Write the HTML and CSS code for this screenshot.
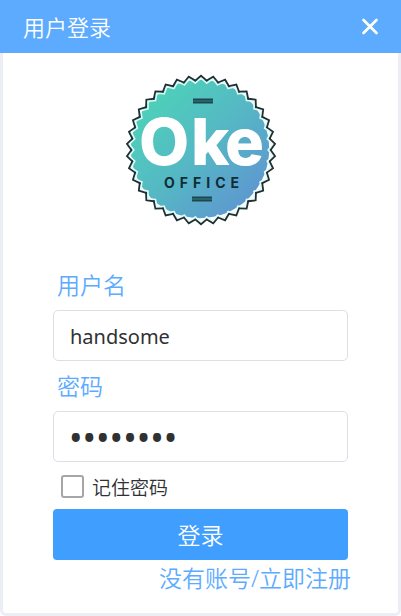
FILE: index.html
```html
<!DOCTYPE html>
<html lang="zh-CN">
<head>
<meta charset="utf-8">
<meta name="viewport" content="width=device-width, initial-scale=1">
<title>用户登录</title>
<link rel="stylesheet" href="styles.css">
</head>
<body>
<main class="dialog">
  <header class="titlebar">
    <h1 class="title">用户登录</h1>
    <button class="close" type="button" aria-label="关闭">
      <svg viewBox="0 0 18 18" width="18" height="18" aria-hidden="true"><path d="M2.5 2 15.500 15M15.500 2 2.500 15" fill="none" stroke="#fff" stroke-width="2.7" stroke-linecap="round"/></svg>
    </button>
  </header>
  <form class="form">
    <svg class="logo" viewBox="-76 -76 152 152" width="152" height="152" role="img" aria-label="Oke Office">
      <defs>
        <linearGradient id="sea" x1="0.12" y1="0.12" x2="0.88" y2="0.88">
          <stop offset="0" stop-color="#4dd2b9"/>
          <stop offset="0.5" stop-color="#55b8c4"/>
          <stop offset="1" stop-color="#5e97d0"/>
        </linearGradient>
        <!-- one tooth, doubled up to the 38 of the full rim -->
        <g id="t1">
          <path d="M-5.55-67 0-71.800 5.550-67" stroke="#e4faf6" stroke-width="1.5"/>
          <path d="M-5.750-69.400 0-74.300 5.750-69.400" stroke="#1d3034" stroke-width="1.8"/>
        </g>
        <g id="t2"><use href="#t1"/><use href="#t1" transform="rotate(9.47368)"/></g>
        <g id="t4"><use href="#t2"/><use href="#t2" transform="rotate(18.94737)"/></g>
        <g id="t8"><use href="#t4"/><use href="#t4" transform="rotate(37.89474)"/></g>
        <g id="t16"><use href="#t8"/><use href="#t8" transform="rotate(75.78947)"/></g>
      </defs>
      <circle cx="-1" cy="-1" r="69.2" fill="url(#sea)"/>
      <g fill="none" stroke-linejoin="miter" stroke-linecap="round">
        <use href="#t16"/>
        <use href="#t16" transform="rotate(151.57895)"/>
        <use href="#t4" transform="rotate(303.15789)"/>
        <use href="#t2" transform="rotate(341.05263)"/>
      </g>
      <path d="M-8-49H12M-9 49H11" stroke="#3b8187" stroke-width="4"/>
      <path d="M-8-50.500H12M-8-47.500H12M-9 47.500H11M-9 50.500H11" stroke="#1f4650" stroke-width="1.8"/>
      <text class="brand" y="15" x="-62 -10 24">Oke</text>
      <text class="brand-sub" x="-37" y="38">OFFICE</text>
    </svg>
    <label class="label" for="user">用户名</label>
    <input class="field" id="user" type="text" value="handsome">
    <label class="label" for="pass">密码</label>
    <input class="field field-password" id="pass" type="password" value="12345678">
    <label class="remember"><input class="check" type="checkbox">记住密码</label>
    <button class="submit" type="button">登录</button>
    <a class="register" href="#">没有账号/立即注册</a>
  </form>
</main>
</body>
</html>
```
FILE: styles.css
```css
* { box-sizing: border-box; }

body {
  margin: 0;
  background: #fff;
  color: #303133;
  font-family: "Noto Sans", "Noto Sans CJK SC", sans-serif;
}

.dialog {
  min-height: 100vh;
  display: flex;
  flex-direction: column;
}

.titlebar {
  display: flex;
  align-items: center;
  justify-content: space-between;
  height: 53px;
  padding: 0 22px 0 23px;
  background: #5cabff;
  color: #fff;
}

.title {
  margin: 0;
  padding-bottom: 2px;
  font-size: 22px;
  font-weight: 350;
}

.close {
  display: flex;
  padding: 0;
  border: 0;
  background: none;
}

.form {
  flex: 1;
  display: flex;
  flex-direction: column;
  padding: 21px 50px 12px;
  border: 3px solid #ebeef5;
  border-top: 0;
  border-radius: 0 0 6px 6px;
}

.logo {
  align-self: center;
  margin-bottom: 34px;
}

.brand {
  fill: #fff;
  font-family: Inter, sans-serif;
  font-size: 65px;
  font-weight: 800;
}

.brand-sub {
  fill: #102c35;
  font-family: Inter, sans-serif;
  font-size: 14px;
  font-weight: 700;
  letter-spacing: 5px;
}

.label {
  padding-left: 4px;
  color: #5cabff;
  font-size: 23px;
  font-weight: 350;
  line-height: 50px;
}

.field {
  width: 100%;
  height: 51px;
  padding: 2px 16px 0;
  border: 1px solid #dcdfe6;
  border-radius: 5px;
  background: #fff;
  color: #303133;
  font-family: inherit;
  font-size: 20px;
}

.field-password {
  padding-left: 15px;
  font-size: 36px;
}

.remember {
  display: flex;
  align-items: center;
  gap: 8px;
  height: 47px;
  padding: 2px 0 0 8px;
  font-size: 19px;
  font-weight: 350;
}

.check {
  appearance: none;
  width: 23px;
  height: 23px;
  margin: 0;
  border: 2px solid #a6a6a6;
  border-radius: 3px;
  background: #fff;
}

.submit {
  height: 51px;
  padding: 0 0 2px;
  border: 0;
  border-radius: 4px;
  background: #409eff;
  color: #fff;
  font-family: inherit;
  font-size: 23px;
  font-weight: 350;
}

.register {
  align-self: flex-end;
  margin-right: -3px;
  color: #5cabff;
  font-size: 23px;
  font-weight: 350;
  line-height: 36px;
  text-decoration: none;
  white-space: nowrap;
}
```
